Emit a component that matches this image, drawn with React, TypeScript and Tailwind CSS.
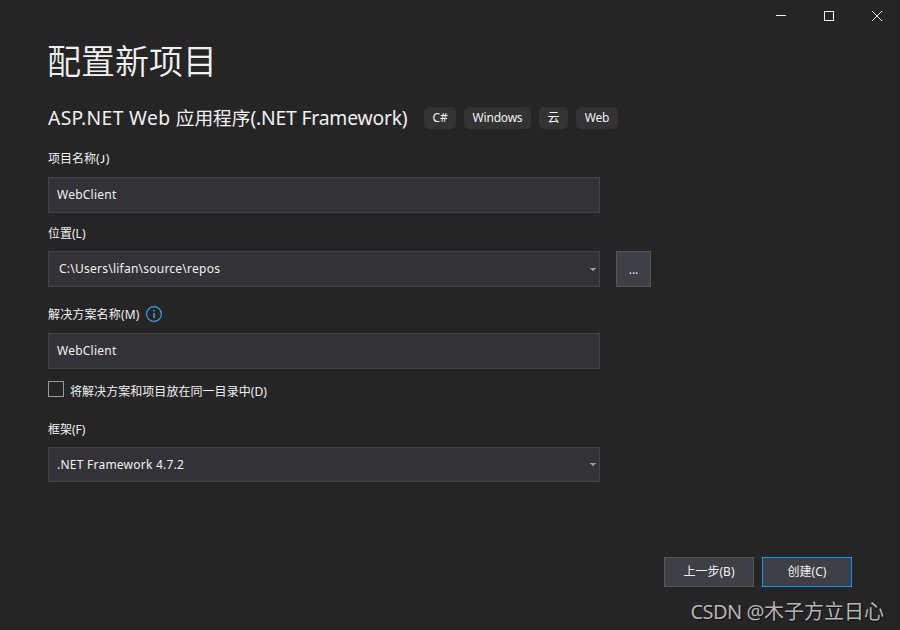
import React from "react";
import clsx from "clsx";

const tags = [
  { name: "C#", width: "w-8" },
  { name: "Windows", width: "w-[67px]" },
  { name: "云", width: "w-[29px]" },
  { name: "Web", width: "w-[42px]" },
];

const Arrow = () => (
  <svg className="h-[3px] w-[6px]" viewBox="0 0 6 3" fill="#999999">
    <path d="M0 0h6v1H5L3.5 3h-1L1 1H0z" />
  </svg>
);

interface FieldProps {
  value: string;
  dropdown?: boolean;
  className?: string;
}

const Field: React.FC<FieldProps> = ({ value, dropdown = false, className }) => (
  <div
    className={clsx(
      "flex w-[552px] shrink-0 items-center justify-between border border-[#434346] bg-[#333337] pr-[3px]",
      className
    )}
  >
    <span className="tracking-[0.24px]">{value}</span>
    {dropdown && <Arrow />}
  </div>
);

const Label = ({ children, className }: { children: React.ReactNode; className?: string }) => (
  <div className={clsx("flex items-center text-[12px] whitespace-nowrap", className)}>{children}</div>
);

const WindowControls = () => (
  <div className="flex h-8 justify-end">
    <div className="flex w-12 items-center justify-center pl-[2px]">
      <div className="mb-px h-px w-[10px] bg-[#f1f1f1]" />
    </div>
    <div className="flex w-12 items-center justify-center pl-[2px]">
      <div className="h-[10px] w-[10px] border border-[#f1f1f1]" />
    </div>
    <div className="flex w-12 items-center justify-center pl-[2px]">
      <svg className="h-[10px] w-[10px]" viewBox="0 0 10 10" stroke="#dedede" fill="none">
        <path d="M0 0l10 10M10 0L0 10" />
      </svg>
    </div>
  </div>
);

export default function App() {
  return (
    <div className="flex h-[630px] w-[900px] flex-col overflow-hidden bg-[#252526] font-['Noto_Sans','Noto_Sans_CJK_SC',sans-serif] text-[12px] leading-none text-[#f1f1f1]">
      <WindowControls />

      <main className="flex flex-col px-12">
        <h1 className="-ml-px flex h-[58px] items-center text-[34px] font-[350]">配置新项目</h1>

        <div className="mt-[13px] flex h-[30px] items-center">
          <h2 className="w-[376px] text-[18.7px] whitespace-nowrap">
            <span className="text-[19.3px] tracking-[0.34px]">ASP.NET Web </span>
            应用程序
            <span className="text-[19.3px] tracking-[-0.18px]">(.NET Framework)</span>
          </h2>
          <div className="flex gap-2">
            {tags.map((tag) => (
              <span
                key={tag.name}
                className={clsx(
                  "flex h-[22px] items-center justify-center rounded-[5px] bg-[#333334] tracking-[-0.2px]",
                  tag.width
                )}
              >
                {tag.name}
              </span>
            ))}
          </div>
        </div>

        <Label className="mt-4 h-5">
          项目名称(<span className="px-[0.5px] font-['Lato',sans-serif]">J</span>)
        </Label>
        <Field value="WebClient" className="mt-2 h-9 pl-2" />

        <Label className="mt-[11px] h-5">位置(L)</Label>
        <div className="mt-[7px] flex gap-4">
          <Field value="C:\Users\lifan\source\repos" dropdown className="h-9 pl-[10px]" />
          <button className="h-9 w-[35px] border border-[#555555] bg-[#3f3f46] pt-[2px]">...</button>
        </div>

        <Label className="mt-[17px] h-5 gap-[7px]">
          <span className="pt-[2px] tracking-[0.15px]">解决方案名称(M)</span>
          <svg className="h-4 w-4" viewBox="0 0 16 16" fill="none" stroke="#3f9be0">
            <circle cx="8" cy="8" r="7.4" strokeWidth="1.2" />
            <path d="M8 7v5M8 4v1.5" strokeWidth="1.6" />
          </svg>
        </Label>
        <Field value="WebClient" className="mt-[9px] h-9 pl-2" />

        <div className="mt-3 flex h-5 gap-[6px]">
          <div className="h-4 w-4 border border-[#999999]" />
          <Label className="h-[22px] tracking-[0.05px]">将解决方案和项目放在同一目录中(D)</Label>
        </div>

        <Label className="mt-[19px] h-5">框架(F)</Label>
        <Field value=".NET Framework 4.7.2" dropdown className="mt-[7px] h-[35px] pl-2" />

        <div className="mt-[75px] flex justify-end gap-2">
          <button className="h-[30px] w-[90px] border border-[#555555] bg-[#3f3f46]">上一步(B)</button>
          <button className="h-[30px] w-[90px] border border-[#0097fb] bg-[#3f3f46]">创建(C)</button>
        </div>
      </main>

      <div className="mt-[10px] flex h-[30px] items-center justify-end pr-4 text-[20px] whitespace-nowrap text-[#b4b4b4] [text-shadow:1px_1px_1px_#111111]">
        <span className="tracking-[-0.5px] whitespace-pre">CSDN @</span>木子方立日心
      </div>
    </div>
  );
}
